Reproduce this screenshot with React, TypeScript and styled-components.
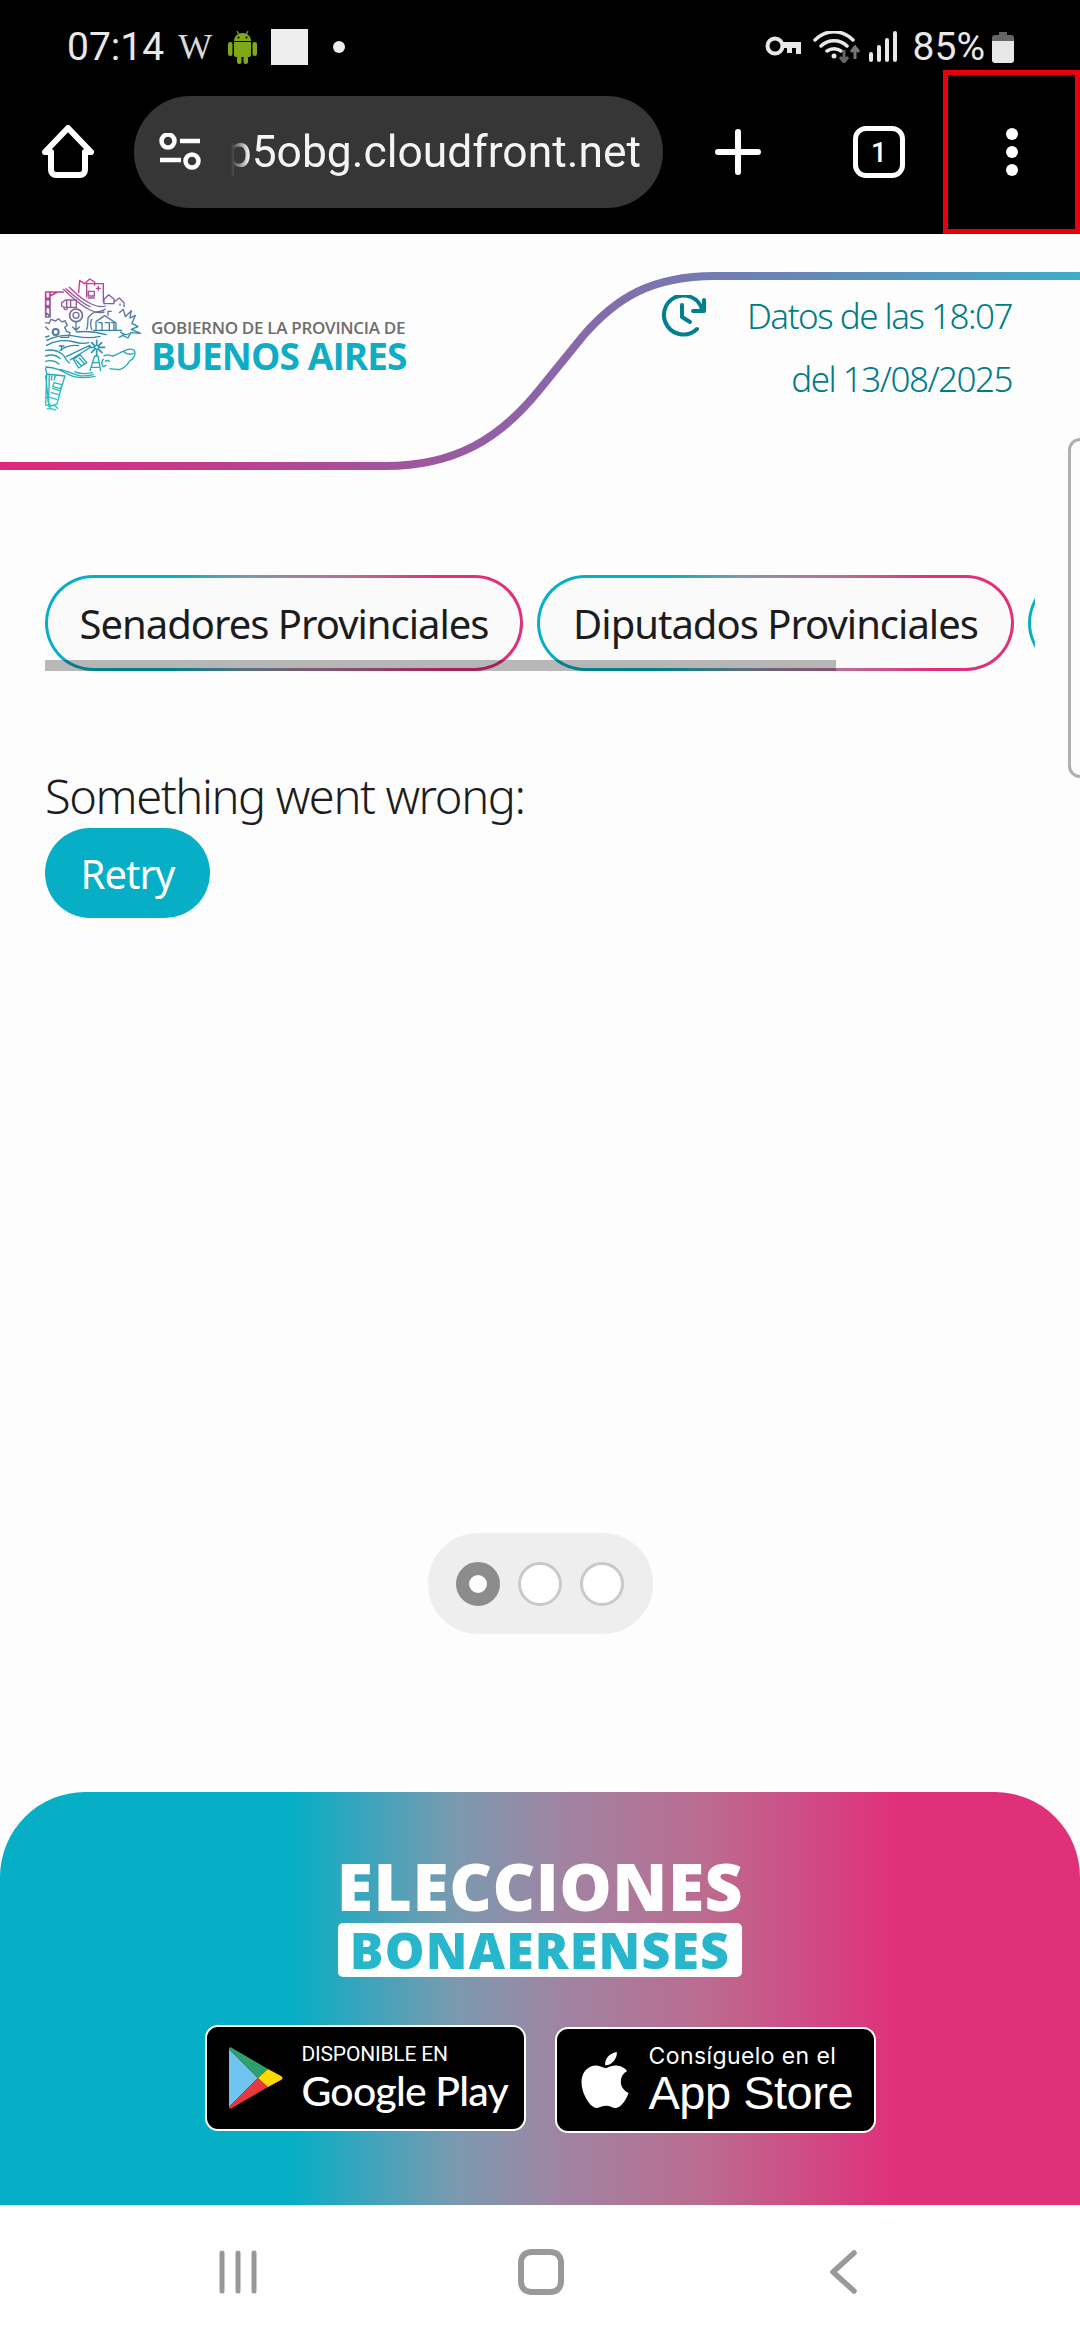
import React from 'react'
import styled, { createGlobalStyle } from 'styled-components'
import { FaApple } from 'react-icons/fa'

const GlobalStyle = createGlobalStyle`
  html, body {
    margin: 0;
    padding: 0;
    background: #fdfdfd;
  }
  * {
    box-sizing: border-box;
  }
`

const brandGradient = `90deg, #06aec6 27%, #7a9ab0 42%, #a084a2 52%, #bb6c90 65%, #e0307a 83%`

const Screen = styled.div`
  position: relative;
  width: 1080px;
  height: 2340px;
  display: flex;
  flex-direction: column;
  overflow: hidden;
  background: #fdfdfd;
  font-family: "Noto Sans", sans-serif;
`

const StatusBar = styled.div`
  height: 70px;
  flex: none;
  background: #000;
  color: #e8e8e8;
  display: flex;
  align-items: center;
  justify-content: space-between;
  padding: 24px 66px 0 67px;
  font-family: Roboto, sans-serif;
  font-size: 39px;
`

const StatusGroup = styled.div`
  display: flex;
  align-items: center;
`

const Wiki = styled.span`
  font-family: "Liberation Serif", serif;
  font-size: 36px;
  margin: 0 16px 0 14px;
  color: #d8d8d8;
`

const NotifSquare = styled.div`
  width: 37px;
  height: 36px;
  margin-left: 14px;
  background: #eee;
`

const Dot = styled.div`
  width: 12px;
  height: 12px;
  margin-left: 25px;
  border-radius: 50%;
  background: #eee;
`

const Toolbar = styled.div`
  height: 164px;
  flex: none;
  background: #000;
  display: flex;
  align-items: center;
  padding-left: 42px;
`

const UrlPill = styled.div`
  width: 529px;
  height: 112px;
  margin-left: 40px;
  border-radius: 56px;
  background: #363636;
  display: flex;
  align-items: center;
  padding: 0 22px 0 25px;
  flex: none;
`

const UrlText = styled.div`
  flex: 1;
  overflow: hidden;
  margin-left: 16px;
  display: flex;
  justify-content: flex-end;
  white-space: nowrap;
  color: #f4f4f4;
  font-family: Roboto, sans-serif;
  font-size: 44.4px;
  mask-image: linear-gradient(90deg, transparent 14px, #000 32px);
`

const TabCount = styled.div`
  width: 52px;
  height: 52px;
  margin-left: 92px;
  border: 5px solid #fff;
  border-radius: 13px;
  color: #fff;
  display: flex;
  align-items: center;
  justify-content: center;
  font-family: Roboto, sans-serif;
  font-weight: 500;
  font-size: 28px;
`

const MenuButton = styled.div`
  width: 137px;
  height: 164px;
  margin-left: auto;
  border: 5px solid #e8000b;
  display: flex;
  align-items: center;
  justify-content: center;
`

const Page = styled.div`
  position: relative;
  flex: 1;
  display: flex;
  flex-direction: column;
`

const Curve = styled.svg`
  position: absolute;
  left: 0;
  top: 0;
`

const Header = styled.div`
  height: 236px;
  flex: none;
  display: flex;
  justify-content: space-between;
  padding: 38px 68px 0 40px;
`

const Brand = styled.div`
  display: flex;
  align-items: flex-start;
  gap: 1px;
`

const BrandText = styled.div`
  padding-top: 46px;
  font-family: "Open Sans", sans-serif;
`

const BrandSmall = styled.div`
  color: #6d6d6d;
  font-size: 17px;
  line-height: 20px;
  font-weight: 600;
  letter-spacing: -0.3px;
`

const BrandBig = styled.div`
  color: #0eadc5;
  font-size: 37px;
  line-height: 35px;
  font-weight: 700;
  letter-spacing: -0.9px;
`

const Updated = styled.div`
  display: flex;
  gap: 40px;
  padding-top: 12px;
  color: #007b88;
  font-size: 35px;
  font-weight: 300;
  line-height: 63px;
  text-align: right;
  letter-spacing: -1.5px;
`

const ClockSvg = styled.svg`
  margin-top: 11px;
  flex: none;
`

const TabsWrap = styled.div`
  position: relative;
  width: 990px;
  margin: 105px 0 0 45px;
  height: 96px;
  overflow: hidden;
  display: flex;
  gap: 14px;
`

const TabPill = styled.div<{ $w: number }>`
  flex: none;
  width: ${(p) => p.$w}px;
  height: 96px;
  border-radius: 48px;
  border: 3px solid transparent;
  background: linear-gradient(#fafafb, #fafafb) padding-box,
    linear-gradient(${brandGradient}) border-box;
  display: flex;
  align-items: center;
  justify-content: center;
  color: #1c1c1c;
  font-size: 40px;
  letter-spacing: -1px;
`

const ScrollThumb = styled.div`
  position: absolute;
  left: 0;
  bottom: 0;
  width: 791px;
  height: 11px;
  background: rgba(0, 0, 0, 0.27);
`

const ErrorText = styled.div`
  margin: 95px 0 2px 45px;
  color: #1c1c1c;
  font-size: 47px;
  line-height: 60px;
  font-weight: 300;
  letter-spacing: -1.4px;
`

const RetryButton = styled.button`
  display: block;
  width: 165px;
  height: 90px;
  margin: 0 0 0 45px;
  padding: 0;
  border: none;
  border-radius: 45px;
  background: #07afc6;
  color: #fff;
  font-family: inherit;
  font-size: 40px;
  letter-spacing: -1px;
`

const Pager = styled.div`
  align-self: center;
  margin-top: 615px;
  width: 225px;
  height: 101px;
  border-radius: 50px;
  background: #eee;
  display: flex;
  align-items: center;
  justify-content: center;
  gap: 18px;
`

const PagerDot = styled.div<{ $active?: boolean }>`
  width: 44px;
  height: 44px;
  border-radius: 50%;
  background: #fff;
  border: ${(p) => (p.$active ? '13px solid #8c8c8c' : '3px solid #c9c9c9')};
`

const SideTab = styled.div`
  position: absolute;
  right: -20px;
  top: 204px;
  width: 32px;
  height: 340px;
  border: 3px solid #b0b0b0;
  border-radius: 12px;
  background: #fdfdfd;
`

const Banner = styled.div`
  height: 413px;
  flex: none;
  border-radius: 85px 85px 0 0;
  background: linear-gradient(${brandGradient});
  display: flex;
  flex-direction: column;
  align-items: center;
  padding-top: 60px;
`

const Elecciones = styled.div`
  color: #fff;
  font-family: "Open Sans", sans-serif;
  font-weight: 800;
  font-size: 66px;
  line-height: 66px;
  letter-spacing: 0.5px;
`

const Bonaerenses = styled.div`
  width: 404px;
  height: 54px;
  margin-top: 5px;
  border-radius: 5px;
  background: #fff;
  color: #27b6cc;
  display: flex;
  align-items: center;
  justify-content: center;
  font-family: "Open Sans", sans-serif;
  font-weight: 800;
  font-size: 50px;
  letter-spacing: 1.2px;
`

const Badges = styled.div`
  display: flex;
  align-items: flex-start;
  gap: 29px;
  margin-top: 48px;
`

const Badge = styled.div<{ $offset?: number }>`
  width: 321px;
  height: 106px;
  margin-top: ${(p) => p.$offset ?? 0}px;
  border: 2px solid #fff;
  border-radius: 13px;
  background: #000;
  color: #fff;
  display: flex;
  align-items: center;
`

const BadgeText = styled.div`
  display: flex;
  flex-direction: column;
`

const BadgeSmall = styled.span<{ $apple?: boolean }>`
  font-family: ${(p) => (p.$apple ? 'Inter, sans-serif' : 'Roboto, sans-serif')};
  font-size: ${(p) => (p.$apple ? 23 : 21)}px;
  line-height: 26px;
  letter-spacing: ${(p) => (p.$apple ? 0.4 : -0.2)}px;
`

const BadgeBig = styled.span<{ $apple?: boolean }>`
  font-family: ${(p) => (p.$apple ? '"Liberation Sans", sans-serif' : 'Lato, sans-serif')};
  font-size: ${(p) => (p.$apple ? 47 : 41)}px;
  line-height: 48px;
  font-weight: ${(p) => (p.$apple ? 400 : 500)};
  letter-spacing: ${(p) => (p.$apple ? -0.5 : -0.8)}px;
`

const NavBar = styled.div`
  height: 135px;
  flex: none;
  background: #fff;
  display: flex;
  align-items: center;
  padding: 0 0 2px 219px;
`

function AndroidIcon() {
  return (
    <svg width="29" height="34" viewBox="0 0 29 34" fill="#7fa81b">
      <path d="M9 1l2 4M20 1l-2 4" stroke="#7fa81b" strokeWidth="1.2" />
      <path d="M6 11c0-5 4-8 8.500-8S23 6 23 11z" />
      <circle cx="10.500" cy="7.500" r="1.100" fill="#000" />
      <circle cx="18.500" cy="7.500" r="1.100" fill="#000" />
      <path d="M6 12h17v13a2 2 0 0 1-2 2H8a2 2 0 0 1-2-2z" />
      <rect x="0" y="12" width="4.500" height="14" rx="2.200" />
      <rect x="24.500" y="12" width="4.500" height="14" rx="2.200" />
      <rect x="9" y="26" width="4.500" height="8" rx="2" />
      <rect x="15.500" y="26" width="4.500" height="8" rx="2" />
    </svg>
  )
}

function StatusIcons() {
  return (
    <svg width="133" height="32" viewBox="0 0 133 32" fill="none" style={{ marginRight: 15 }}>
      {/* key */}
      <circle cx="10" cy="15" r="7.500" stroke="#e8e8e8" strokeWidth="4" />
      <path d="M18 11h18v12h-5v-6h-4v5h-5v-5h-4z" fill="#e8e8e8" />
      {/* wifi */}
      <path d="M50 9c11-11 27-11 38 0M56 15c7-7 19-7 26 0M62 20c4-3 10-3 14 0" stroke="#e8e8e8" strokeWidth="3.500" strokeLinecap="round" />
      <circle cx="69" cy="25" r="2.500" fill="#e8e8e8" />
      <path d="M79 19v11M75 26l4 5 4-5" stroke="#666" strokeWidth="3" />
      <path d="M90 28V17M86 21l4-5 4 5" stroke="#777" strokeWidth="3" />
      {/* signal */}
      <path d="M106 23v6M114 16v13M122 9v20M130 2v27" stroke="#e8e8e8" strokeWidth="4" strokeLinecap="round" />
    </svg>
  )
}

function BatteryIcon() {
  return (
    <svg width="22" height="31" viewBox="0 0 22 31" style={{ marginLeft: 7 }}>
      <path d="M7 0h8v4H7z" fill="#666" />
      <rect x="0" y="3" width="22" height="10" rx="3" fill="#666" />
      <path d="M0 9h22v19a3 3 0 0 1-3 3H3a3 3 0 0 1-3-3z" fill="#e8e8e8" />
    </svg>
  )
}

function HomeIcon() {
  return (
    <svg width="52" height="54" viewBox="0 0 52 54" fill="none" stroke="#fff" strokeWidth="6" strokeLinecap="round" strokeLinejoin="round">
      <path d="M3 27L26 3l23 24h-6v18a5 5 0 0 1-5 5H14a5 5 0 0 1-5-5V27z" />
    </svg>
  )
}

function SiteIcon() {
  return (
    <svg width="42" height="38" viewBox="0 0 42 38" fill="none" stroke="#fff" strokeWidth="4.500" style={{ flex: 'none' }}>
      <circle cx="9" cy="8" r="6.500" />
      <path d="M21 8h20M1 27h21" />
      <circle cx="33" cy="28" r="6.500" />
    </svg>
  )
}

function PlusIcon() {
  return (
    <svg width="46" height="46" viewBox="0 0 46 46" stroke="#fff" strokeWidth="6" strokeLinecap="round" style={{ marginLeft: 52, flex: 'none' }}>
      <path d="M23 3v40M3 23h40" />
    </svg>
  )
}

function MoreIcon() {
  return (
    <svg width="14" height="48" viewBox="0 0 14 48" fill="#fff">
      <circle cx="7" cy="6" r="6" />
      <circle cx="7" cy="24" r="6" />
      <circle cx="7" cy="42" r="6" />
    </svg>
  )
}

function ClockIcon() {
  return (
    <ClockSvg width="46" height="44" viewBox="0 0 46 44" fill="none" stroke="#007f8c" strokeWidth="4" strokeLinecap="round" strokeLinejoin="round">
      <path d="M36 34A19.500 19.500 0 1 1 41 14" />
      <path d="M43 5v11H32" />
      <path d="M21 10v12l8 5" />
    </ClockSvg>
  )
}

function HeaderCurve() {
  return (
    <Curve width="1080" height="260" viewBox="0 0 1080 260" fill="none">
      <defs>
        <linearGradient id="curveStroke" x1="0" x2="1080" y1="0" y2="0" gradientUnits="userSpaceOnUse">
          <stop offset="0" stopColor="#e0267f" />
          <stop offset="0.5" stopColor="#8c64a8" />
          <stop offset="1" stopColor="#3eacc8" />
        </linearGradient>
      </defs>
      <path
        d="M0 232H385C455 232 500 205 540 155L583 102C615 65 650 42 715 42H1080"
        stroke="url(#curveStroke)"
        strokeWidth="8"
      />
    </Curve>
  )
}

// line drawing of the province, traced roughly from the reference at 3x
function ProvinceLogo() {
  return (
    <svg width="110" height="145" viewBox="0 0 330 435" fill="none" stroke="url(#logoStroke)" strokeWidth="4" strokeLinejoin="round" strokeLinecap="round" style={{ flex: 'none' }}>
      <defs>
        <linearGradient id="logoStroke" gradientUnits="userSpaceOnUse" x1="40" y1="40" x2="120" y2="410">
          <stop offset="0" stopColor="#da2f94" />
          <stop offset="0.22" stopColor="#80659f" />
          <stop offset="0.45" stopColor="#2f86a8" />
          <stop offset="0.7" stopColor="#22adbb" />
          <stop offset="1" stopColor="#35cdc8" />
        </linearGradient>
      </defs>
      {/* crane */}
      <path d="M17 60h13v75h-13zM17 75l13 12M30 75l-13 12M17 98l13 12M30 98l-13 12M30 60h40M30 72l22-12M17 122l13 10" strokeWidth="5" />
      {/* factory and hospital */}
      <path d="M116 62l3-36 15 9 15-14 15 9v10M140 35h50v55M140 35v40M145 58h18v14h-18zM145 78h18M175 43v12M169 49h12" />
      {/* road */}
      <path d="M70 52c25 22 50 48 80 62 17 8 30 10 42 6M88 46c22 22 42 40 66 50 16 7 32 10 42 6M78 50c24 22 46 42 72 54" />
      {/* houses */}
      <path d="M192 82l14-14 16 13v14h-30zM222 90l16-12 14 14v12M240 96v4" />
      {/* truck */}
      <path d="M65 92l12-8h32v22H72l-7-4zM80 84v22M92 84v22M72 108a5 5 0 0 0 10 0" />
      {/* sunflower */}
      <circle cx="108" cy="130" r="19" strokeDasharray="5 2" strokeWidth="5" />
      <circle cx="108" cy="130" r="9" />
      <path d="M108 149v28M98 165l10 10 10-10" />
      {/* gear */}
      <path d="M17 152l10 2 6-12 14 5 8-7 12 10 8-4 7 14-8 6 6 12 10 4-5 14H62" />
      <circle cx="47" cy="180" r="9" strokeWidth="6" />
      <path d="M17 165l8 8M17 195l10-3" />
      {/* power plant and school */}
      <path d="M140 172c5-10 3-22 4-34 10-14 18-20 30-19 12 0 16-5 22-8M155 172c-4-10-4-20 0-30" />
      <path d="M168 175v-26l26-18 34 22v22zM176 152h10v22M196 152h12v22M214 152h8v22M204 130v-12h10M160 175h85" />
      {/* coast zigzag */}
      <path d="M238 122l12-10 6 22 18-18-4 22 16-8-10 24 18 10-20 8 28 12-30-2-8 16-16-8-10 6" />
      <path d="M242 180c6 8 14 10 24 6" />
      {/* fields */}
      <path d="M20 205c30-14 60-18 88-12 22 4 46 6 72 0M20 220c24-14 56-18 82-10 14 4 30 6 44 2M110 180c30-4 60 0 88 8M60 235c20-14 40-16 56-14" />
      <path d="M17 235c26-4 40 4 50 12 12 10 8 18 22 26M17 252c18-6 34-2 44 8M17 268c14-4 28-2 40 8M58 222h14M65 222v12" />
      {/* tilted house and arm */}
      <path d="M78 254l72-34-2 8-58 36M100 262l20-14 20 24-24 16zM108 264l16 18M118 258l14 16" />
      {/* windmill */}
      <circle cx="170" cy="226" r="6" />
      <path d="M170 205v13M170 234v16M150 226h12M178 226h16M155 212l9 9M176 232l10 10M185 212l-9 9M164 232l-9 9" strokeWidth="5" />
      <path d="M150 296l14-44h10l8 44M158 272h18M154 286h26" />
      {/* cow */}
      <path d="M192 252c10-8 18 0 26 0 12-2 20-10 32-14 10-6 24-10 34-2 4 12-4 26-14 30-8 12-16 24-30 26-10 2-20-2-30-2M190 262c-6 6-6 16 0 22l8-4M196 268c4-4 10-4 12 0M250 238c8 8 18 12 30 6" />
      {/* waves */}
      <path d="M17 285c30 2 46 10 68 22 20 10 50 12 80 6M60 292c22 4 34 14 54 18 14 3 30 2 46-2M105 300c18 6 36 6 52 2" />
      {/* port and fish */}
      <path d="M17 290l3 16 55 6-10 32-14 52-24 8c-4-30-6-60-10-92M20 306l-3 90M28 306l-2 84M36 308l-2 16M46 312l-4 12" />
      <path d="M42 332l24 6-4 12-24-6zM38 350l22 6M34 362l22 6M30 376l20 6" />
      <path d="M18 375c6 2 8 8 6 14M17 400c8-4 16 4 26 0 4 2 8 6 10 10M22 410c8-2 18 2 24 4M30 394c-2 4-2 8 0 12" />
    </svg>
  )
}

function PlayIcon() {
  return (
    <svg width="54" height="62" viewBox="0 0 54 62" style={{ marginLeft: 22, marginRight: 19, flex: 'none' }}>
      <path d="M0 2v58l29-29z" fill="#6fc5f0" />
      <path d="M0 2c0-2 2-2 3-1l36 21-10 9z" fill="#2ba16c" />
      <path d="M0 60c0 2 2 2 3 1l36-21-10-9z" fill="#e5393f" />
      <path d="M39 22l13 7c2 1 2 3 0 4l-13 7-10-9z" fill="#fdd900" />
    </svg>
  )
}

function RecentsIcon() {
  return (
    <svg width="38" height="44" viewBox="0 0 38 44" stroke="#999" strokeWidth="5" strokeLinecap="round">
      <path d="M3 3v38M19 3v38M35 3v38" />
    </svg>
  )
}

function NavHomeIcon() {
  return (
    <svg width="46" height="46" viewBox="0 0 46 46" fill="none" stroke="#999" strokeWidth="6" style={{ marginLeft: 261 }}>
      <path d="M14 3h18c7 0 11 4 11 11v18c0 7-4 11-11 11H14C7 43 3 39 3 32V14C3 7 7 3 14 3z" />
    </svg>
  )
}

function BackIcon() {
  return (
    <svg width="27" height="44" viewBox="0 0 27 44" fill="none" stroke="#999" strokeWidth="5.500" strokeLinecap="round" strokeLinejoin="round" style={{ marginLeft: 266 }}>
      <path d="M24 3L3 22l21 19" />
    </svg>
  )
}

export default function App() {
  return (
    <Screen>
      <GlobalStyle />
      <StatusBar>
        <StatusGroup>
          07:14
          <Wiki>W</Wiki>
          <AndroidIcon />
          <NotifSquare />
          <Dot />
        </StatusGroup>
        <StatusGroup>
          <StatusIcons />
          85%
          <BatteryIcon />
        </StatusGroup>
      </StatusBar>

      <Toolbar>
        <HomeIcon />
        <UrlPill>
          <SiteIcon />
          <UrlText>p5obg.cloudfront.net</UrlText>
        </UrlPill>
        <PlusIcon />
        <TabCount>1</TabCount>
        <MenuButton>
          <MoreIcon />
        </MenuButton>
      </Toolbar>

      <Page>
        <HeaderCurve />
        <SideTab />
        <Header>
          <Brand>
            <ProvinceLogo />
            <BrandText>
              <BrandSmall>GOBIERNO DE LA PROVINCIA DE</BrandSmall>
              <BrandBig>BUENOS AIRES</BrandBig>
            </BrandText>
          </Brand>
          <Updated>
            <ClockIcon />
            <div>
              Datos de las 18:07
              <br />
              del 13/08/2025
            </div>
          </Updated>
        </Header>

        <TabsWrap>
          <TabPill $w={478}>Senadores Provinciales</TabPill>
          <TabPill $w={477}>Diputados Provinciales</TabPill>
          <TabPill $w={200} />
          <ScrollThumb />
        </TabsWrap>

        <ErrorText>Something went wrong:</ErrorText>
        <RetryButton>Retry</RetryButton>

        <Pager>
          <PagerDot $active />
          <PagerDot />
          <PagerDot />
        </Pager>
      </Page>

      <Banner>
        <Elecciones>ELECCIONES</Elecciones>
        <Bonaerenses>BONAERENSES</Bonaerenses>
        <Badges>
          <Badge>
            <PlayIcon />
            <BadgeText>
              <BadgeSmall>DISPONIBLE EN</BadgeSmall>
              <BadgeBig>Google Play</BadgeBig>
            </BadgeText>
          </Badge>
          <Badge $offset={2}>
            <FaApple size={64} style={{ marginLeft: 16, marginRight: 12, flex: 'none' }} />
            <BadgeText>
              <BadgeSmall $apple>Consíguelo en el</BadgeSmall>
              <BadgeBig $apple>App Store</BadgeBig>
            </BadgeText>
          </Badge>
        </Badges>
      </Banner>

      <NavBar>
        <RecentsIcon />
        <NavHomeIcon />
        <BackIcon />
      </NavBar>
    </Screen>
  )
}
